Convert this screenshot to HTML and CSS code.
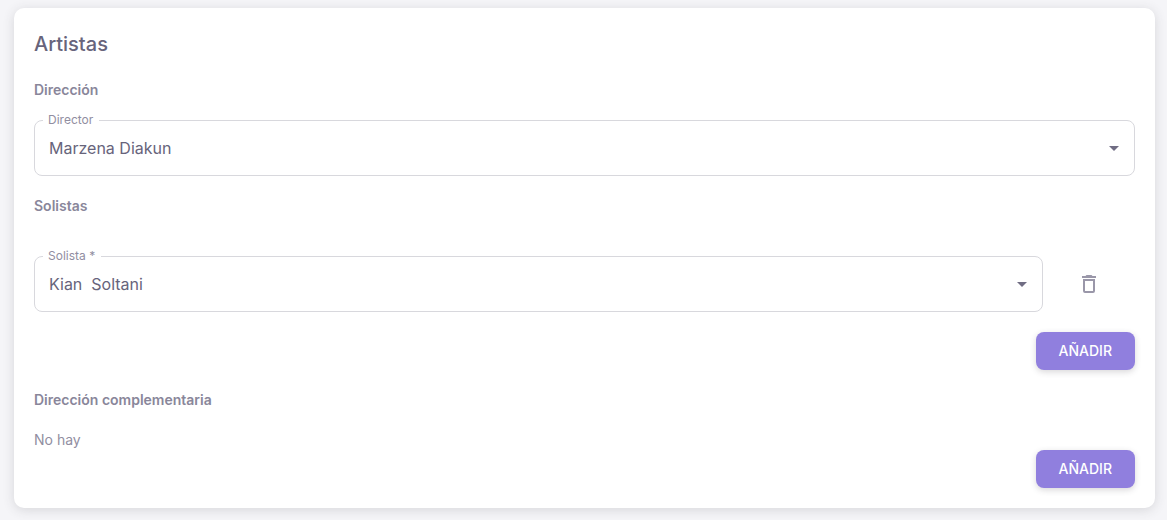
FILE: index.html
```html
<!DOCTYPE html>
<html lang="es">
<head>
<meta charset="utf-8">
<meta name="viewport" content="width=device-width, initial-scale=1">
<title>Artistas</title>
<link rel="stylesheet" href="styles.css">
</head>
<body>
<main class="page">
  <form class="card">
    <h1 class="card-title">Artistas</h1>

    <section class="group">
      <h2 class="group-title">Dirección</h2>
      <fieldset class="field">
        <legend class="field-legend"><label for="director">Director</label></legend>
        <div class="field-control">
          <select class="field-select" id="director">
            <option>Marzena Diakun</option>
          </select>
          <svg class="field-arrow" viewBox="0 0 24 24" aria-hidden="true"><path d="M7 10l5 5 5-5z"/></svg>
        </div>
      </fieldset>
    </section>

    <section class="group group-roomy">
      <h2 class="group-title">Solistas</h2>
      <div class="row">
        <fieldset class="field">
          <legend class="field-legend"><label for="solista">Solista *</label></legend>
          <div class="field-control">
            <select class="field-select" id="solista" required>
              <option>Kian&nbsp; Soltani</option>
            </select>
            <svg class="field-arrow" viewBox="0 0 24 24" aria-hidden="true"><path d="M7 10l5 5 5-5z"/></svg>
          </div>
        </fieldset>
        <button class="icon-button" type="button" aria-label="Eliminar">
          <svg class="icon" viewBox="0 0 24 24" aria-hidden="true"><path d="M6 19A2 2 0 0 0 8 21H16A2 2 0 0 0 18 19V7H6V19M8 9H16V19H8V9M15.5 4L14.5 3H9.5L8.5 4H5V6H19V4H15.500Z"/></svg>
        </button>
      </div>
      <button class="button" type="button">AÑADIR</button>
    </section>

    <section class="group">
      <h2 class="group-title">Dirección complementaria</h2>
      <div class="empty">
        <p class="empty-text">No hay</p>
        <button class="button" type="button">AÑADIR</button>
      </div>
    </section>
  </form>
</main>
</body>
</html>
```
FILE: styles.css
```css
* {
  box-sizing: border-box;
}

body {
  margin: 0;
  background: #f5f5f8;
  color: #67647b;
  font-family: Inter, "Liberation Sans", sans-serif;
  font-size: 14px;
  line-height: 20px;
}

.page {
  padding: 8px 12px 12px 14px;
}

.card {
  display: flex;
  flex-direction: column;
  gap: 20px;
  padding: 20px;
  border-radius: 10px;
  background: #fff;
  box-shadow: 0 2px 12px rgba(58, 53, 65, 0.16);
}

.card-title {
  margin: 0;
  font-size: 20px;
  font-weight: 500;
  line-height: 32px;
}

.group {
  display: flex;
  flex-direction: column;
  gap: 14px;
}

.group-roomy {
  gap: 20px;
}

.group-title {
  margin: 0;
  color: #89869a;
  font-size: 14px;
  font-weight: 600;
  line-height: 20px;
}

.row {
  display: grid;
  grid-template-columns: 11fr 1fr;
  padding-top: 14px;
}

.field {
  min-width: 0;
  margin: 0;
  padding: 0 8px;
  border: 1px solid #d8d8dd;
  border-radius: 8px;
}

.field-legend {
  padding: 0 6px 0 5px;
  color: #918ea1;
  font-size: 12px;
  line-height: 12px;
}

.field-control {
  display: grid;
  align-items: center;
  margin-top: -6px;
}

.field-select {
  grid-area: 1 / 1;
  width: 100%;
  height: 55px;
  padding: 0 32px 0 6px;
  border: 0;
  outline: 0;
  appearance: none;
  background: transparent;
  color: #67647b;
  font-family: inherit;
  font-size: 16px;
}

.field-arrow {
  grid-area: 1 / 1;
  justify-self: end;
  width: 24px;
  height: 24px;
  fill: #706d83;
  pointer-events: none;
}

.icon-button {
  display: grid;
  place-self: center;
  margin-top: 6px;
  padding: 8px;
  border: 0;
  background: transparent;
}

.icon {
  width: 24px;
  height: 24px;
  fill: #9a97a9;
}

.button {
  align-self: flex-end;
  padding: 7px 23px;
  border: 0;
  border-radius: 8px;
  background: #907fde;
  box-shadow: 0 2px 6px rgba(58, 53, 65, 0.2);
  color: #fff;
  font-family: inherit;
  font-size: 14px;
  font-weight: 500;
  line-height: 24px;
}

.empty {
  display: flex;
  flex-direction: column;
  padding-top: 6px;
}

.empty-text {
  margin: 0;
  color: #918ea1;
}
```
